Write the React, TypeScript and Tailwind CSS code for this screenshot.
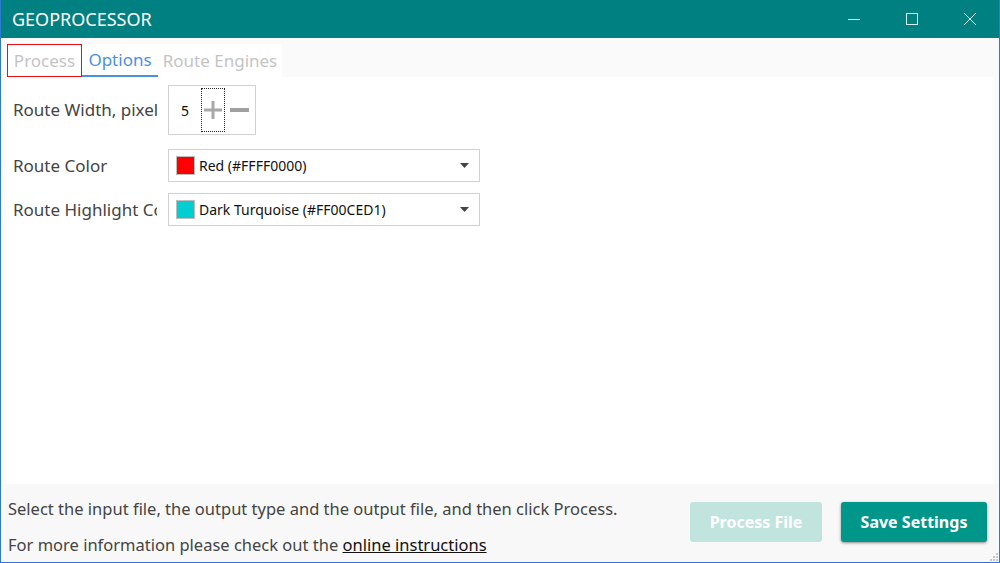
import React from "react";

const font = { fontFamily: '"Noto Sans", "Open Sans", sans-serif' };

const TitleBar = () => (
  <div className="h-[38px] bg-[#008080] flex items-center justify-between shrink-0">
    <span className="pl-[11px] text-[18px] text-white leading-none">GEOPROCESSOR</span>
    <div className="flex h-full items-center">
      <div className="w-[58px] h-full flex items-center justify-center">
        <svg width="12" height="12" viewBox="0 0 12 12">
          <path d="M0 6.5h12" stroke="#d8f0ee" strokeWidth="1" />
        </svg>
      </div>
      <div className="w-[58px] h-full flex items-center justify-center">
        <svg width="12" height="12" viewBox="0 0 12 12">
          <rect x="0.5" y="0.5" width="11" height="11" fill="none" stroke="#d8f0ee" strokeWidth="1" />
        </svg>
      </div>
      <div className="w-[58px] h-full flex items-center justify-center">
        <svg width="12" height="12" viewBox="0 0 12 12">
          <path d="M0 0L12 12M12 0L0 12" stroke="#d8f0ee" strokeWidth="1" />
        </svg>
      </div>
    </div>
  </div>
);

const Tabs = () => (
  <div className="mt-[6px] flex h-[33px] shrink-0">
    <div className="flex bg-white">
      <div className="w-[75px] h-full border border-[#e81010] flex items-center justify-center text-[17px] text-[#c4c4c4]">
        Process
      </div>
      <div className="w-[76px] h-full border-b-2 border-[#4a90e2] flex items-center justify-center text-[17px] text-[#4a90e2]">
        Options
      </div>
      <div className="w-[124px] h-full flex items-center justify-center text-[17px] text-[#c4c4c4]">
        Route Engines
      </div>
    </div>
  </div>
);

const ColorSelect = ({ swatch, label }: { swatch: string; label: string }) => (
  <div className="w-[312px] h-[33px] border border-[#d2d2d2] bg-white flex items-center pl-[7px] pr-[10px]">
    <div className={`w-[19px] h-[19px] border border-[#bdbdbd] ${swatch}`} />
    <span className="ml-[4px] text-[14px] text-[#111] flex-1">{label}</span>
    <svg width="9" height="5" viewBox="0 0 9 5">
      <path d="M0 0h9L4.5 5z" fill="#444" />
    </svg>
  </div>
);

const labelCls = "w-[144px] overflow-hidden whitespace-nowrap text-[17px] text-[#444]";

const Options = () => (
  <div className="flex-1 bg-white pt-[8px] pl-[6px]">
    <div className="flex items-center">
      <div className={labelCls}>Route Width, pixels</div>
      <div className="ml-[11px] w-[88px] h-[50px] border border-[#d2d2d2] flex items-center">
        <span className="ml-[12px] text-[14px] text-[#111]">5</span>
        <div className="ml-[12px] w-[24px] h-[44px] border border-dotted border-[#222] flex items-center justify-center">
          <svg width="20" height="20" viewBox="0 0 20 20">
            <path d="M10 1v18M1 10h18" stroke="#a8a8a8" strokeWidth="3" />
          </svg>
        </div>
        <svg className="ml-[5px]" width="19" height="20" viewBox="0 0 19 20">
          <path d="M0 10h19" stroke="#a0a0a0" strokeWidth="4" />
        </svg>
      </div>
    </div>
    <div className="flex items-center mt-[14px]">
      <div className={labelCls}>Route Color</div>
      <div className="ml-[11px]">
        <ColorSelect swatch="bg-[#ff0000]" label="Red (#FFFF0000)" />
      </div>
    </div>
    <div className="flex items-center mt-[11px]">
      <div className={labelCls}>Route Highlight Color</div>
      <div className="ml-[11px]">
        <ColorSelect swatch="bg-[#00ced1]" label="Dark Turquoise (#FF00CED1)" />
      </div>
    </div>
  </div>
);

const Footer = () => (
  <div className="h-[78px] shrink-0 bg-[#f8f8f8] flex items-center justify-between relative">
    <div className="pl-[7px] pt-[8px] text-[16.5px] text-[#444] flex flex-col gap-[12px] leading-[24px]">
      <span>Select the input file, the output type and the output file, and then click Process.</span>
      <span>
        For more information please check out the{" "}
        <span className="underline text-[#111]">online instructions</span>
      </span>
    </div>
    <div className="flex items-center gap-[19px] pr-[12px] -mt-[2px]">
      <button className="w-[132px] h-[40px] rounded-[3px] bg-[#c1e4de] text-white text-[16px] font-bold">
        Process File
      </button>
      <button className="w-[146px] h-[40px] rounded-[3px] bg-[#00968a] text-white text-[16px] font-bold shadow-[0_1px_3px_rgba(0,0,0,0.45)]">
        Save Settings
      </button>
    </div>
    <svg className="absolute right-[1px] bottom-[1px]" width="10" height="10" viewBox="0 0 10 10">
      {[
        [8, 2], [8, 5], [5, 5], [8, 8], [5, 8], [2, 8],
      ].map(([x, y], i) => (
        <rect key={i} x={x} y={y} width="2" height="2" fill="#c8c8c8" />
      ))}
    </svg>
  </div>
);

export default function App() {
  return (
    <div className="w-[1000px] h-[563px] flex flex-col border-x border-b border-[#2b7bd6] bg-[#fafafa] overflow-hidden" style={font}>
      <TitleBar />
      <div className="flex-1 flex flex-col px-[6px]">
        <Tabs />
        <Options />
      </div>
      <Footer />
    </div>
  );
}
